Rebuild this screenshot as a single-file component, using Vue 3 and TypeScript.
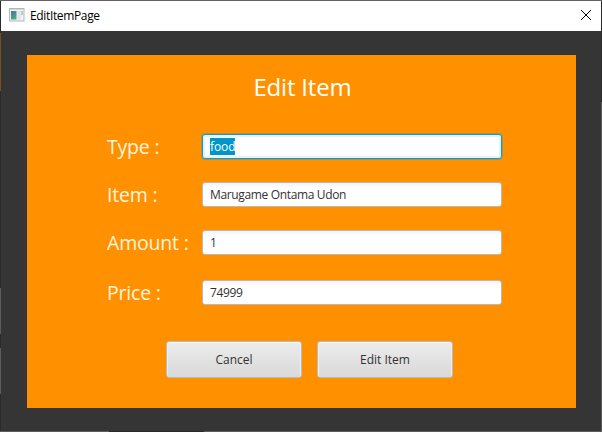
<script setup lang="ts">
import { onMounted, reactive, ref } from 'vue'

interface Field {
  key: string
  label: string
  value: string
}

const fields = reactive<Field[]>([
  { key: 'type', label: 'Type :', value: 'food' },
  { key: 'item', label: 'Item :', value: 'Marugame Ontama Udon' },
  { key: 'amount', label: 'Amount :', value: '1' },
  { key: 'price', label: 'Price :', value: '74999' },
])

const form = ref<HTMLFormElement | null>(null)

onMounted(() => {
  const first = form.value?.querySelector('input')
  first?.focus()
  first?.select()
})
</script>

<template>
  <div class="desktop">
    <div class="window">
      <header class="titlebar">
        <svg class="app-icon" width="16" height="14" viewBox="0 0 16 14">
          <rect x="0.5" y="0.5" width="14.5" height="12.5" fill="#f1f1f3" stroke="#b3b5b9" />
          <path d="M1 1.5h13.5" stroke="#d4d7dc" />
          <defs>
            <linearGradient id="pane" x1="0" y1="0" x2="0.6" y2="1">
              <stop offset="0" stop-color="#4773a0" />
              <stop offset="1" stop-color="#4faa83" />
            </linearGradient>
          </defs>
          <rect x="2" y="3" width="5.5" height="8.5" fill="url(#pane)" />
          <rect x="8.5" y="3" width="3" height="8.5" fill="#dfe2e6" />
          <rect x="12" y="3" width="2" height="4" fill="#a9d3c5" />
        </svg>
        <span class="title">EditItemPage</span>
        <svg class="close" width="12" height="12" viewBox="0 0 12 12">
          <path d="M1 1 11 11M11 1 1 11" stroke="#000" stroke-width="1" />
        </svg>
      </header>
      <main class="content">
        <form ref="form" class="panel" @submit.prevent>
          <h1>Edit Item</h1>
          <div class="fields">
            <label v-for="f in fields" :key="f.key" class="row" :class="f.key">
              <span class="label">{{ f.label }}</span>
              <input v-model="f.value" type="text" spellcheck="false" />
            </label>
          </div>
          <div class="actions">
            <button type="button">Cancel</button>
            <button type="submit">Edit Item</button>
          </div>
        </form>
      </main>
    </div>
  </div>
</template>

<style>
body {
  margin: 0;
  overflow: hidden;
}
</style>

<style scoped>
.desktop {
  box-sizing: border-box;
  width: 602px;
  height: 432px;
  padding: 1px;
  background:
    linear-gradient(#2a2a2a, #2a2a2a) 109px 431px / 95px 1px no-repeat,
    linear-gradient(#666263, #666263) 0 0 / 602px 1px no-repeat,
    linear-gradient(#5c5c5c, #5c5c5c) 0 431px / 602px 1px no-repeat,
    linear-gradient(#74501f, #74501f) 0 33px / 1px 58px no-repeat,
    linear-gradient(#5c5c5c, #5c5c5c) 0 288px / 1px 46px no-repeat,
    linear-gradient(#5c5c5c, #5c5c5c) 0 348px / 1px 46px no-repeat,
    linear-gradient(#5c5c5c, #5c5c5c) 601px 102px / 1px 330px no-repeat,
    #2a2a2a;
  font-family: 'Open Sans', 'Noto Sans', sans-serif;
}
.window {
  display: flex;
  flex-direction: column;
  height: 430px;
  background: #353535;
}
.titlebar {
  display: flex;
  align-items: center;
  box-sizing: border-box;
  height: 30px;
  padding: 0 9px 2px 8px;
  background: #fff;
}
.title {
  flex: 1;
  margin-left: 5px;
  padding-top: 2px;
  font-size: 12px;
  line-height: 16px;
  letter-spacing: -0.35px;
  color: #000;
}
.content {
  padding: 24px 25px 23px 26px;
}
.panel {
  box-sizing: border-box;
  height: 353px;
  padding-top: 17px;
  background: #ff9100;
}
h1 {
  margin: 0;
  padding-left: 2px;
  font-size: 24px;
  font-weight: 400;
  line-height: 30px;
  letter-spacing: -0.2px;
  text-align: center;
  color: #fff;
}
.fields {
  display: grid;
  gap: 23px;
  padding: 32px 0 0 80px;
}
.row {
  display: grid;
  grid-template-columns: 95px 300px;
  align-items: center;
  height: 25px;
}
.row.price {
  margin-top: 2px;
}
.label {
  padding-top: 1px;
  font-size: 19.5px;
  font-weight: 400;
  line-height: 24px;
  letter-spacing: -0.2px;
  white-space: nowrap;
  color: #fff3df;
}
input {
  box-sizing: border-box;
  width: 300px;
  height: 25px;
  padding: 0 7px;
  border: 1px solid #b9b9b9;
  border-radius: 3px;
  outline: none;
  background: linear-gradient(#f3f3f3, #fff 5px);
  font: 12px 'Open Sans', 'Noto Sans', sans-serif;
  letter-spacing: -0.35px;
  color: #323232;
}
input:focus {
  border-color: #039ed3;
  background: #fff;
  box-shadow: inset 0 0 0 2px #e3f3f9, 0 0 0 1px #b5923b;
  letter-spacing: -0.1px;
}
input::selection {
  background: #0096c9;
  color: #fff;
}
.actions {
  display: flex;
  gap: 15px;
  padding: 36px 0 0 139px;
}
button {
  width: 136px;
  height: 37px;
  padding: 0;
  border: 1px solid #bababa;
  border-radius: 3px;
  background: linear-gradient(#ececec, #d9d9d9);
  box-shadow: inset 0 1px #f8f8f8, inset 1px 0 #eee, inset -1px 0 #eee;
  font: 12px 'Open Sans', 'Noto Sans', sans-serif;
  color: #323232;
}
</style>
